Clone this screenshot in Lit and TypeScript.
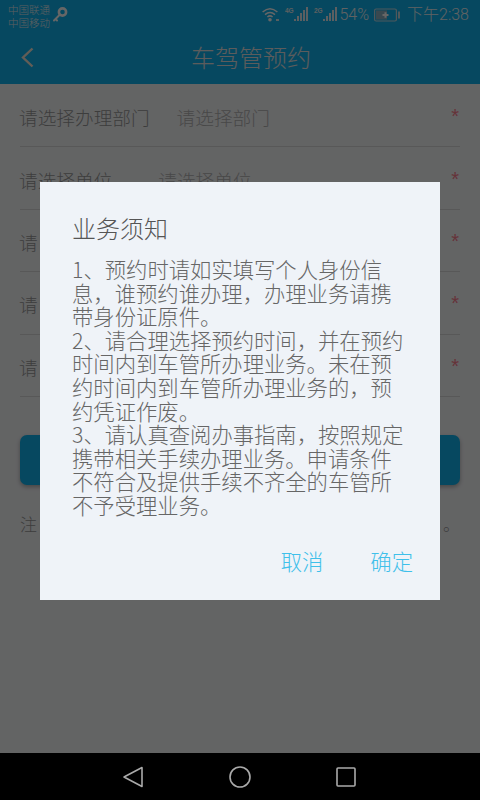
import { LitElement, html, css, svg } from "lit";
import { customElement } from "lit/decorators.js";

const LINES = [
  "1、预约时请如实填写个人身份信",
  "息，谁预约谁办理，办理业务请携",
  "带身份证原件。",
  "2、请合理选择预约时间，并在预约",
  "时间内到车管所办理业务。未在预",
  "约时间内到车管所办理业务的，预",
  "约凭证作废。",
  "3、请认真查阅办事指南，按照规定",
  "携带相关手续办理业务。申请条件",
  "不符合及提供手续不齐全的车管所",
  "不予受理业务。",
];

const ROWS: { label: string; value?: string; gap?: string }[] = [
  { label: "请选择办理部门", value: "请选择部门", gap: "g1" },
  { label: "请选择单位", value: "请选择单位", gap: "g2" },
  { label: "请" },
  { label: "请" },
  { label: "请" },
];

const signal = (label: string) => svg`
  <svg class="sig" width="24" height="16" viewBox="0 0 24 16">
    <text x="0" y="6" font-size="6.5" font-weight="700" fill="#e6eef2" font-family="Liberation Sans, sans-serif">${label}</text>
    <g fill="#e6eef2">
      <rect x="9" y="12" width="2" height="2"/><rect x="12" y="9" width="2" height="5"/>
      <rect x="15" y="6" width="2" height="8"/><rect x="18" y="3" width="2" height="11"/>
      <rect x="21" y="0" width="2" height="14"/>
    </g>
  </svg>`;

@customElement("app-root")
export class AppRoot extends LitElement {
  static styles = css`
    :host {
      display: block;
      width: 480px;
      height: 800px;
      position: relative;
      overflow: hidden;
      background: #f8f9fb;
      font-family: "Noto Sans CJK SC", "Liberation Sans", sans-serif;
      font-weight: 300;
    }
    .screen { display: flex; flex-direction: column; height: 753px; }
    .top { background: #0fb4f0; height: 84px; display: flex; flex-direction: column; flex: none; }
    .status { height: 30px; flex: none; display: flex; align-items: center; padding: 0 11px 0 8px; color: #fff; }
    .carriers { font-size: 10.5px; line-height: 13.5px; display: flex; flex-direction: column; padding-top: 2px; color: #e4ecf0; }
    .key { margin-left: 2px; }
    .spacer { flex: 1; }
    .wifi { margin-right: 4px; }
    .sig { margin-left: 1px; margin-right: 4px; }
    .pct { font-family: Roboto, sans-serif; font-weight: 300; font-size: 16px; line-height: 20px; margin-left: -3px; color: #f0f4f6; }
    .batt { margin: 0 6px 0 5px; }
    .time { font-family: Roboto, "Noto Sans CJK SC", sans-serif; font-weight: 300; font-size: 16px; line-height: 20px; color: #f0f4f6; white-space: nowrap; }
    .bar { flex: 1; display: flex; align-items: center; justify-content: center; position: relative; padding: 0 0 0 22px; }
    .bar-title { font-size: 24px; line-height: 32px; color: #e6e6e6; }
    .back { position: absolute; left: 20px; top: 17px; }
    .form { padding: 1px 20px 0; display: flex; flex-direction: column; }
    .row {
      height: 62.4px;
      display: flex;
      align-items: center;
      border-bottom: 1px solid #dcdcdc;
      font-size: 18.67px;
      color: #999;
      box-sizing: border-box;
      padding-top: 2px;
    }
    .label { white-space: nowrap; margin-left: -1px; }
    .g1 { margin-right: 27px; }
    .g2 { margin-right: 46px; }
    .val { color: #b4b4b4; white-space: nowrap; }
    .star { margin-left: auto; margin-right: 1px; font-family: "Liberation Sans", sans-serif; font-weight: 400; color: #ff8090; font-size: 20px; line-height: 20px; margin-top: -1px; }
    .submit {
      margin: 38px 20px 0;
      height: 50px;
      border-radius: 7px;
      background: #0fb4f0;
      box-shadow: 0 2px 4px rgba(0, 0, 0, 0.3);
      flex: none;
    }
    .note { margin: 27px 20px 0; font-size: 17px; line-height: 24px; color: #999; display: flex; justify-content: space-between; }
    .nav {
      position: absolute;
      left: 0; right: 0; bottom: 0;
      height: 47px;
      background: #000;
      display: flex;
      align-items: center;
      padding-left: 122px;
      gap: 85px;
      z-index: 2;
    }
    .scrim {
      position: absolute;
      inset: 0;
      background: rgba(0, 0, 0, 0.6);
      display: flex;
      justify-content: center;
      padding-top: 182px;
      box-sizing: border-box;
    }
    .dialog {
      width: 400px;
      height: 418px;
      background: #eff3f8;
      box-sizing: border-box;
      padding: 29px 32px 0;
      display: flex;
      flex-direction: column;
      color: #666;
    }
    .title { font-size: 24px; line-height: 34px; color: #555; }
    .body { margin-top: 12px; font-size: 21.33px; line-height: 23.6px; white-space: nowrap; }
    .actions { display: flex; justify-content: flex-end; gap: 47px; margin-top: 29px; margin-right: -5px; }
    .act { font-size: 21.33px; line-height: 30px; color: #3fc0ea; }
  `;

  render() {
    return html`
      <div class="screen">
        <div class="top">
          <div class="status">
            <div class="carriers"><span>中国联通</span><span>中国移动</span></div>
            <svg class="key" width="16" height="18" viewBox="0 0 16 18">
              <circle cx="10.5" cy="6" r="3.6" fill="none" stroke="#fff" stroke-width="2.6"/>
              <path d="M8 8.5 L2 14.5 M3.5 13 L5 14.5" stroke="#fff" stroke-width="2" stroke-linecap="round" fill="none"/>
            </svg>
            <div class="spacer"></div>
            <svg class="wifi" width="18" height="16" viewBox="0 0 18 16">
              <g fill="none" stroke="#fff" stroke-width="1.5">
                <path d="M0.6 5 Q8 -1.6 15.4 5"/><path d="M3 7.6 Q8 3.3 13 7.6"/><path d="M5.4 10 Q8 7.8 10.6 10"/>
              </g>
              <circle cx="8" cy="12.8" r="1.8" fill="#fff"/>
              <rect x="14" y="12" width="3" height="2" fill="#dfeef3"/>
            </svg>
            ${signal("4G")}
            ${signal("2G")}
            <span class="pct">54%</span>
            <svg class="batt" width="27" height="14" viewBox="0 0 27 14">
              <rect x="0.6" y="1" width="21.8" height="12" rx="1.5" fill="none" stroke="#c6dbe4" stroke-width="1.2"/>
              <rect x="2" y="2.4" width="11" height="9.2" fill="#8fb4c5"/>
              <rect x="24" y="3.5" width="2" height="7" fill="#c6dbe4"/>
              <path d="M8.5 7 H14.5 M11.5 4.2 V9.8" stroke="#fff" stroke-width="2"/>
            </svg>
            <span class="time">下午2:38</span>
          </div>
          <div class="bar">
            <svg class="back" width="14" height="22" viewBox="0 0 14 22">
              <path d="M12.5 1.5 L3 10.5 L12.5 19.5" fill="none" stroke="#f5e8d8" stroke-width="2.4"/>
            </svg>
            <span class="bar-title">车驾管预约</span>
          </div>
        </div>
        <div class="form">
          ${ROWS.map(
            (r) => html`<div class="row"><span class="label ${r.gap ?? ""}">${r.label}</span>${r.value ? html`<span class="val">${r.value}</span>` : ""}<span class="star">*</span></div>`
          )}
        </div>
        <div class="submit"></div>
        <div class="note"><span>注</span><span>。</span></div>
      </div>
      <div class="scrim">
        <div class="dialog">
          <div class="title">业务须知</div>
          <div class="body">${LINES.map((l) => html`<div>${l}</div>`)}</div>
          <div class="actions"><span class="act">取消</span><span class="act">确定</span></div>
        </div>
      </div>
      <div class="nav">
        <svg width="22" height="22" viewBox="0 0 22 22"><path d="M2 11 L20 1.5 V20.5 Z" fill="none" stroke="#aaa" stroke-width="1.6" stroke-linejoin="round"/></svg>
        <svg width="22" height="22" viewBox="0 0 22 22"><circle cx="11" cy="11" r="10" fill="none" stroke="#aaa" stroke-width="1.6"/></svg>
        <svg width="20" height="20" viewBox="0 0 20 20"><rect x="1" y="1" width="18" height="18" rx="1" fill="none" stroke="#aaa" stroke-width="1.6"/></svg>
      </div>
    `;
  }
}
